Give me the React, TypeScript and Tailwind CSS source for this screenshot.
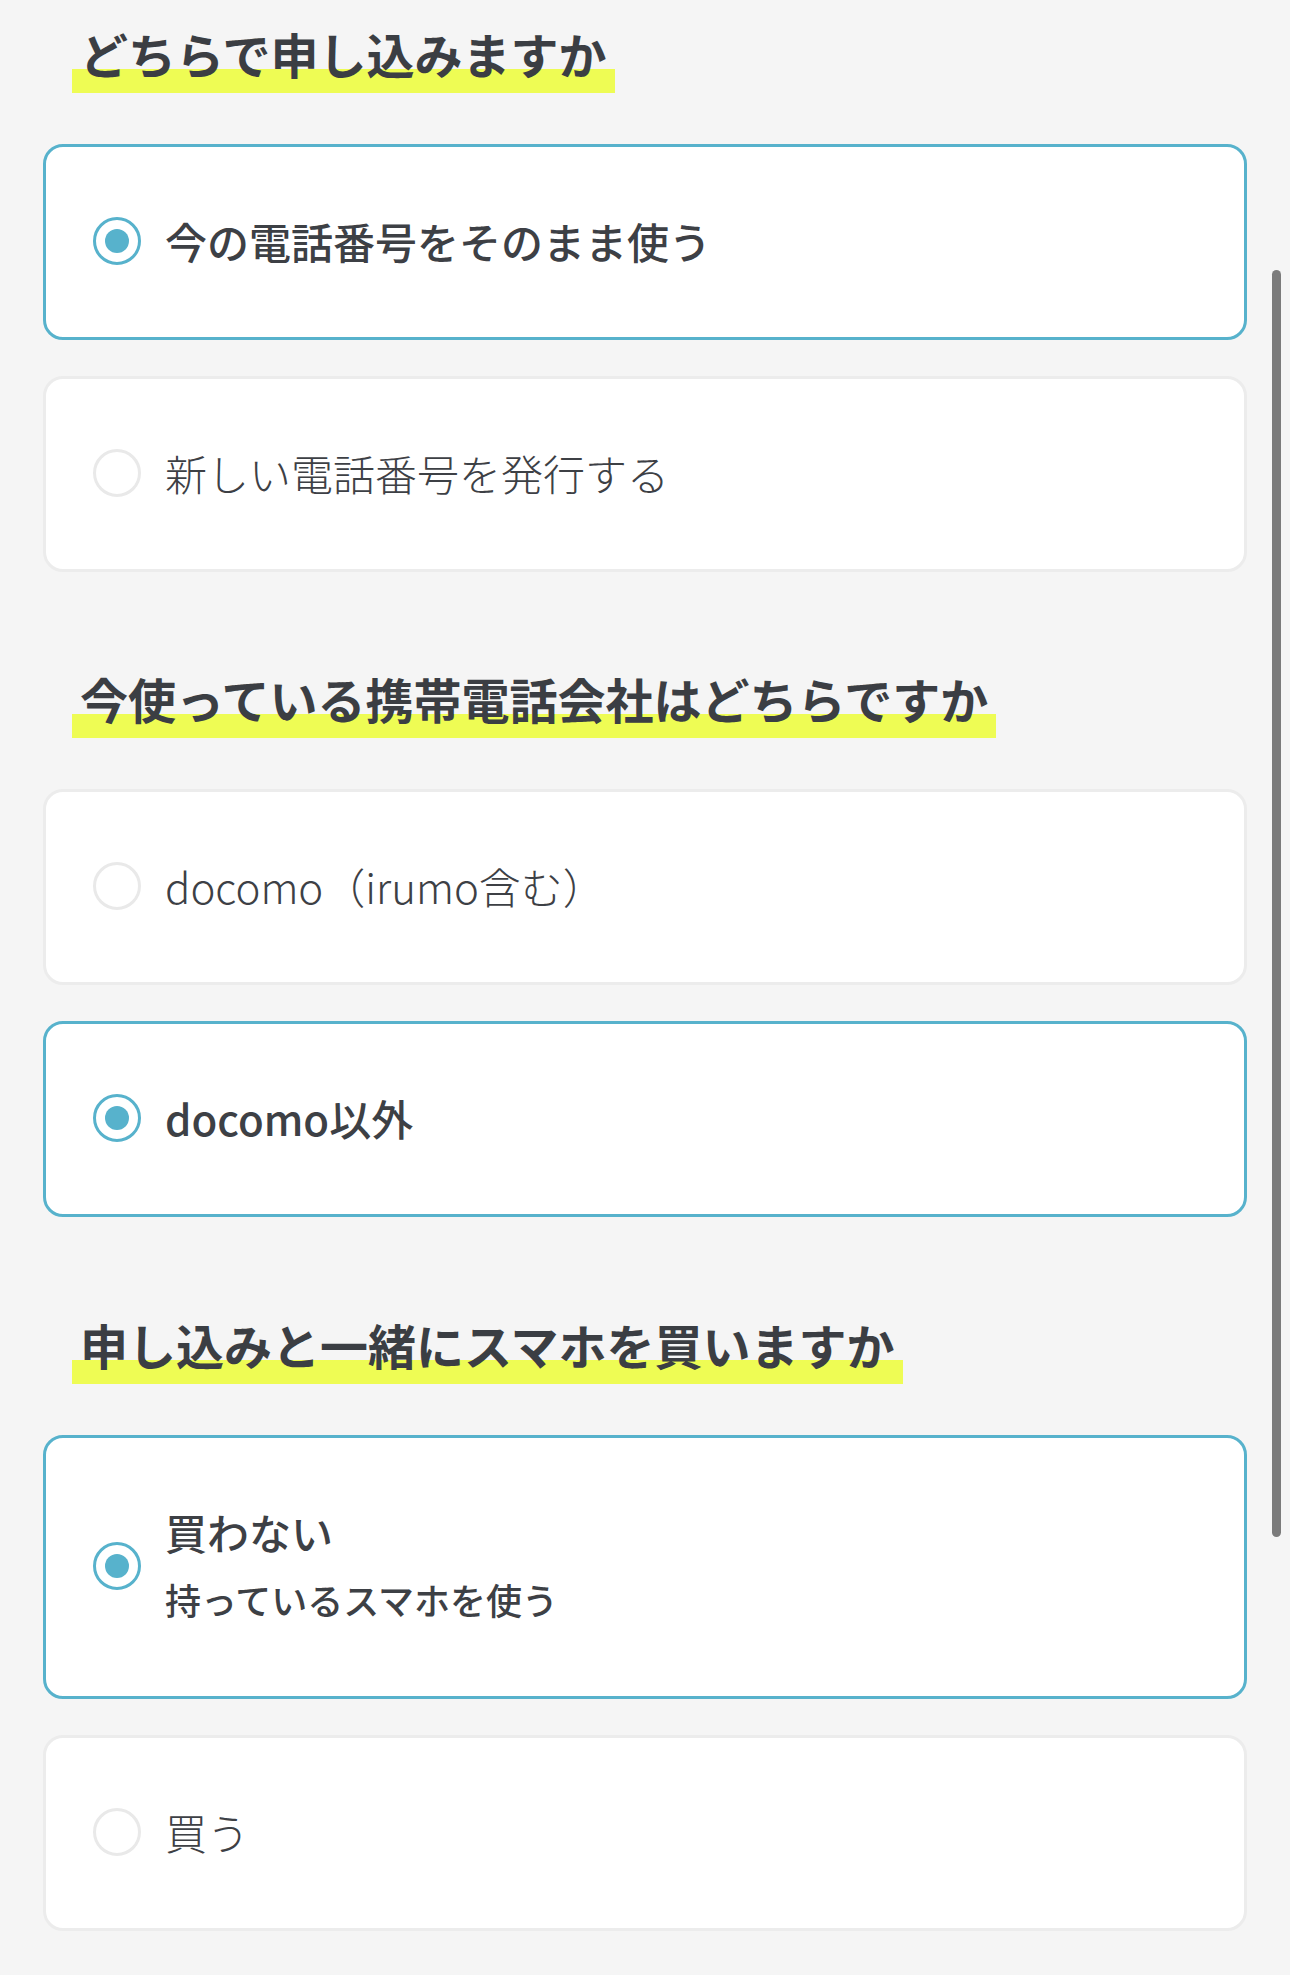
import React from "react"

type Option = {
  label: string
  sub?: string
  selected?: boolean
}

type Question = {
  title: string
  options: Option[]
}

const questions: Question[] = [
  {
    title: "どちらで申し込みますか",
    options: [
      { label: "今の電話番号をそのまま使う", selected: true },
      { label: "新しい電話番号を発行する" },
    ],
  },
  {
    title: "今使っている携帯電話会社はどちらですか",
    options: [
      { label: "docomo（irumo含む）" },
      { label: "docomo以外", selected: true },
    ],
  },
  {
    title: "申し込みと一緒にスマホを買いますか",
    options: [
      { label: "買わない", sub: "持っているスマホを使う", selected: true },
      { label: "買う" },
    ],
  },
]

const Radio = ({ checked }: { checked?: boolean }) => (
  <span
    className={
      checked
        ? "flex h-[48px] w-[48px] shrink-0 items-center justify-center rounded-full border-[3.5px] border-[#57b2cc] bg-white"
        : "flex h-[48px] w-[48px] shrink-0 items-center justify-center rounded-full border-[3.5px] border-[#e9e9e9] bg-white"
    }
  >
    {checked && <span className="h-[24px] w-[24px] rounded-full bg-[#57b2cc]" />}
  </span>
)

const OptionCard = ({ option }: { option: Option }) => (
  <div
    className={
      option.selected
        ? "flex items-center gap-[24px] rounded-[20px] border-[3px] border-[#57b2cc] bg-white pl-[47px] pr-[40px] pt-[61px] pb-[63px]"
        : "flex items-center gap-[24px] rounded-[20px] border-[3px] border-[#ececec] bg-white pl-[47px] pr-[40px] pt-[61px] pb-[63px]"
    }
  >
    <Radio checked={option.selected} />
    <div className="flex flex-col">
      <span
        className={
          option.selected
            ? option.sub
              ? "text-[42px] font-medium leading-[66px] text-[#3d4045]"
              : "text-[42px] font-medium leading-[66px] text-[#3d4045]"
            : "text-[42px] font-light leading-[66px] text-[#3d4045]"
        }
      >
        {option.label}
      </span>
      {option.sub && (
        <span className="text-[36px] font-medium leading-[68px] text-[#3d4045]">{option.sub}</span>
      )}
    </div>
  </div>
)

export default function App() {
  return (
    <div
      className="relative min-h-[1975px] bg-[#f5f5f5] px-[43px] pt-[17px]"
      style={{ fontFamily: '"Noto Sans CJK JP", "Noto Sans", sans-serif' }}
    >
      {questions.map((q, i) => (
        <section key={q.title} className={i === 0 ? "" : i === 1 ? "mt-[90px]" : "mt-[91px]"}>
          <div className="pl-[29px]">
            <h2 className="inline-block bg-[linear-gradient(transparent_calc(100%_-_24px),#eefc54_calc(100%_-_24px))] px-[8px] pb-[4px] text-[48px] font-bold leading-[72px] text-[#3b3e43]">
              {q.title}
            </h2>
          </div>
          <div className="mt-[51px] flex flex-col gap-[36px]">
            {q.options.map((o) => (
              <OptionCard key={o.label} option={o} />
            ))}
          </div>
        </section>
      ))}

      {/* scroll indicator */}
      <div className="absolute left-[1272px] top-[270px] h-[1267px] w-[9px] rounded-full bg-[#7b7b7b]" />
    </div>
  )
}
